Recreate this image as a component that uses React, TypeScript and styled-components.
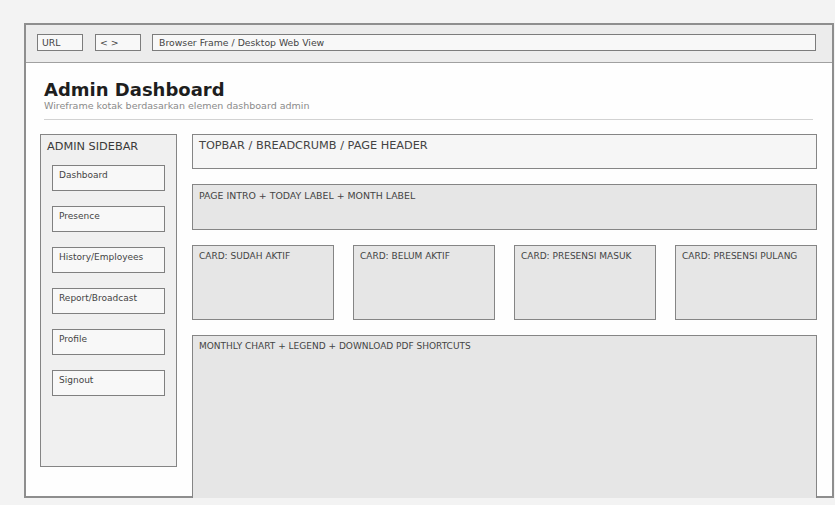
import React from "react";
import styled, { createGlobalStyle } from "styled-components";

const GlobalStyle = createGlobalStyle`
  html, body {
    margin: 0;
    padding: 0;
    overflow: hidden;
    background: #f3f3f3;
    font-family: "DejaVu Sans", Verdana, sans-serif;
    color: #444;
  }
  * { box-sizing: border-box; }
`;

// Browser chrome
const Frame = styled.div`
  margin: 23px 0 0 24px;
  width: 810px;
  height: 475px;
  border: 2px solid #8e8e8e;
  background: #fefefe;
  display: flex;
  flex-direction: column;
`;

const ChromeBar = styled.div`
  height: 38px;
  flex-shrink: 0;
  background: #ececec;
  border-bottom: 1px solid #a0a0a0;
  padding: 9px 16px 0 11px;
  display: flex;
  gap: 12px;
`;

const ChromeBox = styled.div<{ $wide?: boolean }>`
  height: 17px;
  width: ${(p) => (p.$wide ? "auto" : "46px")};
  flex: ${(p) => (p.$wide ? "1" : "none")};
  margin-left: ${(p) => (p.$wide ? "-1px" : "0")};
  border: 1px solid #7c7c7c;
  background: #f8f8f8;
  padding: 0 ${(p) => (p.$wide ? "6px" : "4px")};
  font-size: 9.3px;
  line-height: 15px;
  color: #444;
  white-space: nowrap;
`;

// Page body
const Content = styled.div`
  padding: 0 15px 0 14px;
  display: flex;
  flex-direction: column;
`;

const Header = styled.header`
  margin: 0 4px;
  padding-top: 16px;
  border-bottom: 1px solid #d2d2d2;
  padding-bottom: 7px;
`;

const Title = styled.h1`
  margin: 0;
  font-size: 18px;
  line-height: 21px;
  font-weight: bold;
  color: #1e1e1e;
`;

const Subtitle = styled.p`
  margin: 0;
  font-size: 9.5px;
  line-height: 12px;
  color: #8a8a8a;
`;

const Layout = styled.div`
  margin-top: 14px;
  display: flex;
  gap: 15px;
  align-items: flex-start;
`;

const Sidebar = styled.aside`
  width: 137px;
  height: 333px;
  flex-shrink: 0;
  border: 1px solid #858585;
  background: #f0f0f0;
  padding: 5px 11px 0 11px;
`;

const SidebarTitle = styled.div`
  margin-left: -5px;
  font-size: 11.3px;
  line-height: 13px;
  color: #3a3a3a;
`;

const NavList = styled.nav`
  margin-top: 12px;
  display: flex;
  flex-direction: column;
  gap: 15px;
`;

const NavItem = styled.div`
  height: 26px;
  border: 1px solid #808080;
  background: #f8f8f8;
  padding: 4px 6px 0;
  font-size: 9px;
  line-height: 11px;
  color: #444;
`;

const Main = styled.main`
  flex: 1;
  display: flex;
  flex-direction: column;
  gap: 15px;
`;

const Panel = styled.section<{ $height: number; $tone: "light" | "gray"; $big?: boolean }>`
  height: ${(p) => p.$height}px;
  flex-shrink: 0;
  border: 1px solid #858585;
  background: ${(p) => (p.$tone === "light" ? "#f6f6f6" : "#e6e6e6")};
  padding: ${(p) => (p.$big ? "4px 6px" : "5px 6px")};
  font-size: ${(p) => (p.$big ? "11.3px" : "9px")};
  line-height: ${(p) => (p.$big ? "13px" : "11px")};
  color: #444;
`;

const CardGrid = styled.div`
  display: grid;
  grid-template-columns: repeat(4, 1fr);
  gap: 19px;
`;

const navItems = [
  "Dashboard",
  "Presence",
  "History/Employees",
  "Report/Broadcast",
  "Profile",
  "Signout",
];

const cards = [
  "CARD: SUDAH AKTIF",
  "CARD: BELUM AKTIF",
  "CARD: PRESENSI MASUK",
  "CARD: PRESENSI PULANG",
];

export default function App() {
  return (
    <>
      <GlobalStyle />
      <Frame>
        <ChromeBar>
          <ChromeBox>URL</ChromeBox>
          <ChromeBox>&lt; &gt;</ChromeBox>
          <ChromeBox $wide>Browser Frame / Desktop Web View</ChromeBox>
        </ChromeBar>
        <Content>
          <Header>
            <Title>Admin Dashboard</Title>
            <Subtitle>Wireframe kotak berdasarkan elemen dashboard admin</Subtitle>
          </Header>
          <Layout>
            <Sidebar>
              <SidebarTitle>ADMIN SIDEBAR</SidebarTitle>
              <NavList>
                {navItems.map((item) => (
                  <NavItem key={item}>{item}</NavItem>
                ))}
              </NavList>
            </Sidebar>
            <Main>
              <Panel $height={35} $tone="light" $big>
                TOPBAR / BREADCRUMB / PAGE HEADER
              </Panel>
              <Panel $height={46} $tone="gray" style={{ fontSize: "9.4px" }}>
                PAGE INTRO + TODAY LABEL + MONTH LABEL
              </Panel>
              <CardGrid>
                {cards.map((card) => (
                  <Panel key={card} $height={75} $tone="gray">
                    {card}
                  </Panel>
                ))}
              </CardGrid>
              <Panel $height={200} $tone="gray">
                MONTHLY CHART + LEGEND + DOWNLOAD PDF SHORTCUTS
              </Panel>
            </Main>
          </Layout>
        </Content>
      </Frame>
    </>
  );
}
